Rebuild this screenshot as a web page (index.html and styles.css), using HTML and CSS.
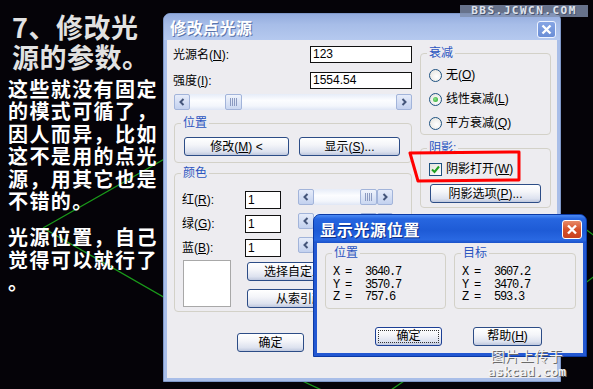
FILE: index.html
```html
<!DOCTYPE html>
<html lang="zh-CN">
<head>
<meta charset="UTF-8">
<title>修改点光源</title>
<link rel="stylesheet" href="styles.css">
</head>
<body>

<svg class="wires" width="593" height="389">
  <line x1="43" y1="228" x2="263" y2="103"/>
  <line x1="43" y1="228" x2="263" y2="354"/>
  <line x1="298" y1="379" x2="326" y2="392"/>
  <line x1="407" y1="379" x2="388" y2="392"/>
  <line x1="584" y1="228" x2="596" y2="237"/>
  <line x1="584" y1="284" x2="596" y2="275"/>
</svg>

<div class="intro">
  <h1>7、修改光<br>源的参数。</h1>
  <p>这些就没有固定<br>的模式可循了，<br>因人而异，比如<br>这不是用的点光<br>源，用其它也是<br>不错的。</p>
  <p>光源位置，自己<br>觉得可以就行了<br>。</p>
</div>

<div class="win win-main">
  <div class="titlebar">
    <span class="title">修改点光源</span>
    <span class="close"><svg width="17" height="15" viewBox="0 0 17 15"><path d="M4.5 3.5 L12.5 11.5 M12.5 3.5 L4.5 11.5"/></svg></span>
  </div>
  <div class="win-body main-body">
    <div class="col-left">
      <div class="field-row"><span class="lbl">光源名(<u>N</u>):</span><span class="textbox">123</span></div>
      <div class="field-row"><span class="lbl">强度(<u>I</u>):</span><span class="textbox">1554.54</span></div>
      <div class="scroll scroll-wide">
        <span class="arrow"><svg width="14" height="14" viewBox="0 0 14 14"><path d="M8.5 4 L5.5 7 L8.5 10"/></svg></span>
        <span class="track"><span class="thumb thumb-wide"><svg width="9" height="8" viewBox="0 0 9 8"><path d="M1.5 0 V8 M3.5 0 V8 M5.5 0 V8 M7.5 0 V8"/></svg></span></span>
        <span class="arrow"><svg width="14" height="14" viewBox="0 0 14 14"><path d="M5.5 4 L8.5 7 L5.5 10"/></svg></span>
      </div>

      <fieldset class="group pos-group">
        <legend>位置</legend>
        <div class="btn-row">
          <button class="btn btn-modify">修改(<u>M</u>) &lt;</button>
          <button class="btn btn-show">显示(<u>S</u>)...</button>
        </div>
      </fieldset>

      <fieldset class="group color-group">
        <legend>颜色</legend>
        <div class="color-inner">
          <div class="color-row">
            <span class="lbl">红(<u>R</u>):</span><span class="textbox small">1</span>
            <div class="scroll scroll-short">
              <span class="arrow"><svg width="14" height="14" viewBox="0 0 14 14"><path d="M8.5 4 L5.5 7 L8.5 10"/></svg></span>
              <span class="track track-end"><span class="thumb"><svg width="9" height="8" viewBox="0 0 9 8"><path d="M1.5 0 V8 M3.5 0 V8 M5.5 0 V8 M7.5 0 V8"/></svg></span></span>
              <span class="arrow"><svg width="14" height="14" viewBox="0 0 14 14"><path d="M5.5 4 L8.5 7 L5.5 10"/></svg></span>
            </div>
          </div>
          <div class="color-row">
            <span class="lbl">绿(<u>G</u>):</span><span class="textbox small">1</span>
            <div class="scroll scroll-short">
              <span class="arrow"><svg width="14" height="14" viewBox="0 0 14 14"><path d="M8.5 4 L5.5 7 L8.5 10"/></svg></span>
              <span class="track track-end"><span class="thumb"><svg width="9" height="8" viewBox="0 0 9 8"><path d="M1.5 0 V8 M3.5 0 V8 M5.5 0 V8 M7.5 0 V8"/></svg></span></span>
              <span class="arrow"><svg width="14" height="14" viewBox="0 0 14 14"><path d="M5.5 4 L8.5 7 L5.5 10"/></svg></span>
            </div>
          </div>
          <div class="color-row">
            <span class="lbl">蓝(<u>B</u>):</span><span class="textbox small">1</span>
            <div class="scroll scroll-short">
              <span class="arrow"><svg width="14" height="14" viewBox="0 0 14 14"><path d="M8.5 4 L5.5 7 L8.5 10"/></svg></span>
              <span class="track track-end"><span class="thumb"><svg width="9" height="8" viewBox="0 0 9 8"><path d="M1.5 0 V8 M3.5 0 V8 M5.5 0 V8 M7.5 0 V8"/></svg></span></span>
              <span class="arrow"><svg width="14" height="14" viewBox="0 0 14 14"><path d="M5.5 4 L8.5 7 L5.5 10"/></svg></span>
            </div>
          </div>
          <div class="swatch-row">
            <div class="swatch"></div>
            <div class="swatch-btns">
              <button class="btn btn-swatch">选择自定义颜色...</button>
              <button class="btn btn-swatch">从索引颜色...</button>
            </div>
          </div>
        </div>
      </fieldset>

      <div class="footer-btns">
        <button class="btn btn-ok">确定</button>
        <button class="btn btn-ok">取消</button>
      </div>
    </div>

    <div class="col-right">
      <fieldset class="group decay-group">
        <legend>衰减</legend>
        <div class="opts">
          <div class="opt"><span class="radio"></span><span>无(<u>O</u>)</span></div>
          <div class="opt"><span class="radio on"></span><span>线性衰减(<u>L</u>)</span></div>
          <div class="opt"><span class="radio"></span><span>平方衰减(<u>Q</u>)</span></div>
        </div>
      </fieldset>
      <fieldset class="group shadow-group">
        <legend>阴影:</legend>
        <div class="opts">
          <div class="opt"><span class="check"><svg width="11" height="11" viewBox="0 0 11 11"><path d="M2 5.5 L4.5 8 L9 2.5"/></svg></span><span>阴影打开(<u>W</u>)</span></div>
          <button class="btn btn-shadow">阴影选项(<u>P</u>)...</button>
        </div>
      </fieldset>
    </div>
  </div>
</div>

<div class="win win-pos">
  <div class="titlebar">
    <span class="title">显示光源位置</span>
    <span class="close"><svg width="18" height="17" viewBox="0 0 18 17"><path d="M5 4.5 L13 12.5 M13 4.5 L5 12.5"/></svg></span>
  </div>
  <div class="win-body pos-body">
    <div class="pos-groups">
      <fieldset class="group coord-group">
        <legend>位置</legend>
        <div class="coords">
          <div><span class="axis">X =</span>3640.7</div>
          <div><span class="axis">Y =</span>3570.7</div>
          <div><span class="axis">Z =</span>757.6</div>
        </div>
      </fieldset>
      <fieldset class="group coord-group">
        <legend>目标</legend>
        <div class="coords">
          <div><span class="axis">X =</span>3607.2</div>
          <div><span class="axis">Y =</span>3470.7</div>
          <div><span class="axis">Z =</span>593.3</div>
        </div>
      </fieldset>
    </div>
    <div class="pos-btns">
      <button class="btn btn-default">确定</button>
      <button class="btn btn-help">帮助(<u>H</u>)</button>
    </div>
  </div>
</div>

<svg class="marker" width="593" height="389">
  <path d="M410 153 L519 152 L519 180 L418 181 Z"/>
</svg>

<div class="wm-top">BBS.JCWCN.COM</div>
<div class="wm-bottom">
  <div class="wm-cn">图片上传于</div>
  <div class="wm-en">askcad.com</div>
</div>

</body>
</html>
```

FILE: styles.css
```css
* {
  box-sizing: border-box;
}
html, body {
  margin: 0;
}
body {
  position: relative;
  width: 593px;
  height: 389px;
  overflow: hidden;
  background: #050308;
  font-family: "Liberation Sans", "Noto Sans CJK SC", sans-serif;
  font-size: 12px;
  color: #000;
}

/* wireframe lines behind everything */
.wires {
  position: absolute;
  left: 0;
  top: 0;
}
.wires line {
  stroke: #1a9a1a;
  stroke-width: 1.3;
}

/* left hand notes */
.intro {
  position: relative;
  width: 160px;
  padding: 12px 0 0 8px;
  color: #fff;
  white-space: nowrap;
  font-family: "Noto Sans CJK SC", sans-serif;
}
.intro h1 {
  margin: 0 0 0 4px;
  font-size: 27px;
  line-height: 30px;
  font-weight: bold;
  color: #e2e2e2;
  letter-spacing: 0.5px;
}
.intro p {
  margin: 6px 0 0;
  font-size: 20px;
  line-height: 22.4px;
  font-weight: bold;
  letter-spacing: 1.4px;
}
.intro p + p {
  margin-top: 14px;
}

/* windows */
.win {
  position: absolute;
  display: flex;
  flex-direction: column;
  padding: 0 3px 3px;
  border: 1px solid #7f98c9;
  border-radius: 7px 7px 0 0;
  background: #a9bee8;
}
.win-main {
  left: 163px;
  top: 13px;
  width: 398px;
  height: 369px;
}
.win-pos {
  left: 313px;
  top: 214px;
  width: 274px;
  height: 143px;
  border-color: #0b3aa6;
  background: #2358d2;
}
.titlebar {
  display: flex;
  align-items: center;
  justify-content: space-between;
  height: 26px;
  margin: 0 -3px;
  padding: 0 4px 0 6px;
  border-radius: 6px 6px 0 0;
  background: linear-gradient(#93abdd 0%, #a7bde8 40%, #b5c9ef 100%);
}
.win-pos .titlebar {
  height: 28px;
  background: linear-gradient(#4b8bf5 0%, #2766e0 14%, #1e5bd6 55%, #2968e2 88%, #1b51c9 100%);
}
.title {
  font-family: "Noto Sans CJK SC", sans-serif;
  font-size: 16px;
  line-height: 18px;
  font-weight: bold;
  color: #fff;
  letter-spacing: 0.5px;
  text-shadow: 1px 1px 0 #5a74aa;
}
.win-pos .title {
  letter-spacing: 0.7px;
  text-shadow: 1px 1px 0 #0c2f8a;
}
.close {
  align-self: flex-end;
  display: flex;
  width: 19px;
  height: 17px;
  margin-bottom: 2px;
  border: 1px solid #eef3ff;
  border-radius: 3px;
  background: linear-gradient(#86a5e4, #6a8ed6);
}
.win-pos .close {
  width: 20px;
  height: 19px;
  margin-bottom: 4px;
  border-color: #fff;
  background: linear-gradient(#e88a66, #d5512a 50%, #c84220);
}
.close path {
  stroke: #fff;
  stroke-width: 2.4;
  fill: none;
}
.win-body {
  flex: 1;
  background: #edecf0;
}

/* main dialog body */
.main-body {
  display: flex;
  gap: 8px;
  padding: 6px 6px 0;
}
.col-left {
  width: 239px;
  display: flex;
  flex-direction: column;
  align-items: flex-start;
}
.col-right {
  width: 131px;
  display: flex;
  flex-direction: column;
}
.field-row {
  width: 239px;
  height: 17px;
  display: flex;
  align-items: center;
  justify-content: space-between;
}
.field-row + .field-row {
  margin-top: 9px;
}
.lbl {
  line-height: 14px;
  white-space: nowrap;
}
.textbox {
  width: 102px;
  height: 17px;
  padding-left: 2px;
  border: 1px solid #111;
  background: #fff;
  line-height: 15px;
}
.textbox.small {
  width: 36px;
  height: 18px;
  line-height: 16px;
}

/* scrollbars */
.scroll {
  display: flex;
  height: 16px;
}
.scroll-wide {
  width: 238px;
  margin: 5px 0 0 1px;
}
.scroll-short {
  width: 95px;
  margin: -2px 0 0 17px;
}
.arrow {
  display: flex;
  align-items: center;
  justify-content: center;
  width: 16px;
  height: 16px;
  border: 1px solid #a2b4da;
  border-radius: 2px;
  background: linear-gradient(#e6ecfa, #c3d1ef);
}
.arrow path {
  stroke: #44557a;
  stroke-width: 2;
  fill: none;
}
.track {
  flex: 1;
  display: flex;
  background: linear-gradient(#e6ecf8, #fcfdff 40%, #f3f6fc 75%, #dfe6f5);
}
.track-end {
  justify-content: flex-end;
}
.thumb {
  display: flex;
  align-items: center;
  justify-content: center;
  width: 17px;
  height: 16px;
  border: 1px solid #a2b4da;
  border-radius: 2px;
  background: linear-gradient(#f0f4fc, #cad7f1);
}
.thumb path {
  stroke: #8b9ac0;
  stroke-width: 1;
  fill: none;
}
.thumb-wide {
  margin-left: 35px;
}

/* group boxes */
.group {
  margin: 0;
  padding: 0;
  min-width: 0;
  border: 1px solid #d3d1c8;
  border-radius: 4px;
}
.group legend {
  margin-left: 6px;
  padding: 0 2px;
  line-height: 14px;
  color: #2b55c0;
}
.pos-group {
  width: 238px;
  margin: 6px 0 0 1px;
}
.btn-row {
  display: flex;
  gap: 10px;
  padding: 7px 0 6px 9px;
}
.color-group {
  width: 238px;
  margin: 3px 0 0 1px;
}
.color-inner {
  padding: 11px 0 3px 7px;
}
.color-row {
  display: flex;
  align-items: flex-start;
  height: 18px;
}
.color-row + .color-row {
  margin-top: 6px;
}
.color-row .lbl {
  width: 63px;
  line-height: 18px;
}
.swatch-row {
  display: flex;
  margin-top: 3px;
}
.swatch {
  width: 48px;
  height: 47px;
  margin-left: 1px;
  border: 1px solid #a8a8a8;
  background: #fff;
}
.swatch-btns {
  display: flex;
  flex-direction: column;
  gap: 8px;
  margin: 2px 0 0 16px;
}

/* buttons */
.btn {
  height: 19px;
  padding: 0;
  border: 1px solid #2c4c86;
  border-radius: 3px;
  background: linear-gradient(#ffffff, #f4f5f9 40%, #dde2ef 80%, #bfc8de);
  font-family: "Liberation Sans", "Noto Sans CJK SC", sans-serif;
  font-size: 12px;
  line-height: 16px;
  color: #000;
  text-align: center;
  white-space: nowrap;
}
.btn-modify {
  width: 105px;
}
.btn-show {
  width: 101px;
}
.btn-swatch {
  width: 128px;
}
.btn-ok {
  width: 67px;
}
.footer-btns {
  display: flex;
  gap: 10px;
  margin: 21px 0 0 64px;
}

/* options on the right */
.decay-group .opts {
  padding: 8px 0 4px 8px;
}
.shadow-group {
  margin-top: 6px;
}
.shadow-group .opts {
  padding: 7px 0 4px 8px;
}
.opt {
  display: flex;
  align-items: center;
  gap: 4px;
  height: 14px;
  line-height: 14px;
  white-space: nowrap;
}
.opt + .opt {
  margin-top: 10px;
}
.radio {
  display: flex;
  align-items: center;
  justify-content: center;
  width: 13px;
  height: 13px;
  border: 1px solid #1d5180;
  border-radius: 50%;
  background: radial-gradient(circle at 60% 60%, #fff, #e2e1da);
}
.radio.on::after {
  content: "";
  width: 5px;
  height: 5px;
  border-radius: 50%;
  background: radial-gradient(circle at 40% 40%, #8ee48e, #21a121);
}
.check {
  display: flex;
  align-items: center;
  justify-content: center;
  width: 13px;
  height: 13px;
  border: 1px solid #1d5180;
  background: linear-gradient(135deg, #e4e3dc, #fff);
}
.check path {
  stroke: #21a121;
  stroke-width: 2;
  fill: none;
}
.btn-shadow {
  width: 111px;
  margin: 8px 0 0 1px;
}

/* position dialog */
.pos-body {
  display: flex;
  flex-direction: column;
  padding: 3px 7px 0 8px;
}
.pos-groups {
  display: flex;
  gap: 8px;
}
.coord-group {
  width: 121px;
}
.coord-group + .coord-group {
  width: 122px;
}
.coords {
  padding: 6px 0 4px 7px;
  font-family: "Liberation Mono", monospace;
  font-size: 12px;
  line-height: 12.5px;
  letter-spacing: -1.2px;
  white-space: nowrap;
}
.axis {
  display: inline-block;
  width: 32px;
}
.pos-btns {
  display: flex;
  gap: 31px;
  margin: 18px 0 0 50px;
}
.btn-default {
  width: 67px;
  border-color: #1c3f95;
  outline: 1px dotted #333;
  outline-offset: -4px;
}
.btn-help {
  width: 69px;
}

/* red hand drawn mark */
.marker {
  position: absolute;
  left: 0;
  top: 0;
}
.marker path {
  fill: none;
  stroke: #f00;
  stroke-width: 3;
  stroke-linejoin: round;
}

/* watermarks */
.wm-top {
  position: absolute;
  left: 460px;
  top: 5px;
  width: 128px;
  height: 12px;
  background: rgba(128, 142, 172, 0.8);
  font-family: "DejaVu Sans Mono", monospace;
  font-size: 11px;
  font-weight: bold;
  line-height: 12px;
  letter-spacing: 1.5px;
  text-align: center;
  color: #dfe3ec;
  text-shadow: 1px 1px 0 #4a5570;
}
.wm-bottom {
  position: absolute;
  left: 484px;
  top: 346px;
  width: 86px;
  text-align: center;
  color: #f4f4f4;
  text-shadow: 1px 1px 0 #6a6a6a;
}
.wm-cn {
  font-family: "Noto Sans CJK SC", sans-serif;
  font-size: 14px;
  line-height: 18px;
  letter-spacing: 0.5px;
}
.wm-en {
  font-family: "DejaVu Sans Mono", monospace;
  font-size: 13px;
  font-weight: bold;
  line-height: 16px;
}
```
